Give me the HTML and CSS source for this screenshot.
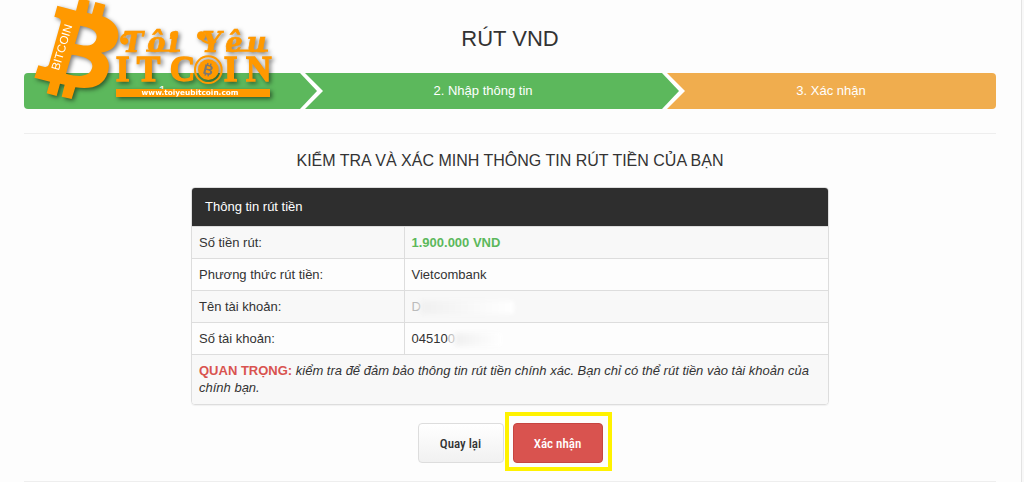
FILE: index.html
```html
<!DOCTYPE html>
<html lang="vi">
<head>
    <meta charset="UTF-8">
    <meta name="viewport" content="width=device-width, initial-scale=1.0">
    <title>Rút VND</title>
    <link rel="stylesheet" href="styles.css">
</head>
<body>
    <main class="page">
        <svg class="logo" viewBox="0 0 780 315" role="img" aria-label="Tôi Yêu Bitcoin">
            <path class="logo-fill" fill-rule="evenodd" d="M112 17 L168 32 L178 -6 L209 2 L201 38 L216 42 L226 6 L256 14 L247 49 C280 60 300 84 294 115 C289 140 273 155 243 158 C267 173 271 195 263 219 C251 257 216 270 166 262 L155 297 L125 290 L134 254 L120 251 L110 288 L80 280 L90 245 L43 233 L55 196 L74 201 Q84 203 87 193 L122 68 Q125 57 116 54 L103 50 Z M181 77 L165 131 C198 140 223 139 229 116 C235 93 213 83 181 77 Z M155 164 L138 221 C178 232 208 231 216 205 C223 178 194 169 155 164 Z"/>
            <text class="logo-side" transform="translate(116 213) rotate(-73)">BITCOIN</text>
            <g class="logo-script">
                <text x="308 382 446" y="155">Tôi</text>
                <text x="546 616 680" y="155">Yêu</text>
            </g>
            <path class="logo-curl" d="M340 100 C310 98 300 112 305 124 C312 136 326 128 320 119"/>
            <circle cx="312" cy="122" r="10" class="logo-fill"/>
            <path class="logo-curl" d="M541 104 C543 126 566 134 588 124 M378 152 H480 M618 152 H744"/>
            <circle cx="544" cy="107" r="13" class="logo-fill"/>
            <circle cx="462" cy="106" r="12" class="logo-fill"/>
            <g class="logo-word">
                <text x="287 350 449" y="243">ITC</text>
                <text x="611 678" y="243">IN</text>
            </g>
            <circle cx="565" cy="209" r="40" class="logo-ring"/>
            <circle cx="565" cy="209" r="31" class="logo-fill"/>
            <text class="logo-coin" x="565" y="224" transform="rotate(14 565 209)">B</text>
            <path class="logo-coin-line" d="M564 189 L562 197 M573 191 L571 199 M557 219 L555 227 M566 222 L564 229"/>
            <rect x="288" y="267" width="462" height="24" class="logo-fill"/>
            <text class="logo-url" x="510" y="286">www.toiyeubitcoin.com</text>
        </svg>

        <h1>RÚT VND</h1>

        <ol class="steps">
            <li class="step done">1.</li>
            <li class="step done">2. Nhập thông tin</li>
            <li class="step active">3. Xác nhận</li>
        </ol>

        <section class="confirm">
            <h2>KIỂM TRA VÀ XÁC MINH THÔNG TIN RÚT TIỀN CỦA BẠN</h2>

            <div class="panel">
                <h3>Thông tin rút tiền</h3>
                <table>
                    <tr>
                        <th scope="row">Số tiền rút:</th>
                        <td class="amount">1.900.000 VND</td>
                    </tr>
                    <tr>
                        <th scope="row">Phương thức rút tiền:</th>
                        <td>Vietcombank</td>
                    </tr>
                    <tr>
                        <th scope="row">Tên tài khoản:</th>
                        <td><span class="faded">D</span><span class="hidden-name"></span></td>
                    </tr>
                    <tr>
                        <th scope="row">Số tài khoản:</th>
                        <td>04510<span class="faded">0</span><span class="hidden-number"></span></td>
                    </tr>
                    <tr>
                        <td colspan="2" class="note"><strong>QUAN TRỌNG:</strong> kiểm tra để đảm bảo thông tin rút tiền chính xác. Bạn chỉ có thể rút tiền vào tài khoản của chính bạn.</td>
                    </tr>
                </table>
            </div>

            <div class="actions">
                <button type="button" class="btn">Quay lại</button>
                <div class="highlight">
                    <button type="submit" class="btn btn-danger">Xác nhận</button>
                </div>
            </div>
        </section>
    </main>
</body>
</html>
```
FILE: styles.css
```css
* {
    box-sizing: border-box;
}
body {
    margin: 0;
    background-color: #f8f8f8;
    color: #333;
    font-family: "Liberation Sans", Arial, sans-serif;
    font-size: 13px;
    line-height: 17px;
}
.page {
    position: relative;
    margin-right: 2px;
    padding: 24px 25px 0 24px;
    background-color: #fdfdfd;
    border-right: 1px solid #e3e3e3;
}
h1, h2, h3 {
    margin: 0;
    font-weight: normal;
}
h1 {
    font-size: 22px;
    line-height: 30px;
    text-align: center;
}

/* Logo */
.logo {
    position: absolute;
    top: 0;
    left: 20px;
    z-index: 2;
    width: 260px;
    height: 105px;
    filter: drop-shadow(2px 2px 2px rgba(0, 0, 0, 0.5));
}
.logo-fill {
    fill: #ff9900;
}
.logo-side {
    fill: #fff;
    font-size: 35px;
}
.logo-script {
    fill: #ff9900;
    stroke: #ff9900;
    stroke-width: 2;
    font-family: "DejaVu Serif", serif;
    font-size: 82px;
    font-style: italic;
    font-weight: bold;
}
.logo-curl {
    fill: none;
    stroke: #ff9900;
    stroke-width: 7;
}
.logo-word {
    fill: #ff9900;
    stroke: #ff9900;
    stroke-width: 4;
    font-family: "Liberation Serif", serif;
    font-size: 106px;
    font-weight: bold;
}
.logo-ring {
    fill: none;
    stroke: #ff9900;
    stroke-width: 6;
}
.logo-coin {
    fill: #777;
    font-size: 42px;
    font-weight: bold;
    text-anchor: middle;
}
.logo-coin-line {
    stroke: #777;
    stroke-width: 4;
}
.logo-url {
    fill: #fff;
    font-family: "DejaVu Sans", sans-serif;
    font-size: 22px;
    font-weight: bold;
    text-anchor: middle;
}

/* Steps */
.steps {
    display: grid;
    grid-template-columns: 276fr 362fr 334fr;
    margin: 19px 0 0;
    padding: 0;
    overflow: hidden;
    border-radius: 4px;
    list-style: none;
}
.step {
    position: relative;
    height: 36px;
    padding-left: 4px;
    color: #fff;
    line-height: 36px;
    text-align: center;
}
.done {
    background-color: #5cb85c;
}
.active {
    background-color: #f0ad4e;
}
.done::before,
.done::after {
    content: "";
    position: absolute;
    top: 0;
    left: calc(100% - 1px);
    z-index: 1;
    width: 24px;
    height: 36px;
    background-color: #fff;
    clip-path: polygon(1px 0, 6px 0, 100% 50%, 6px 100%, 1px 100%);
}
.done::after {
    width: 18px;
    background-color: #5cb85c;
    clip-path: polygon(0 0, 1px 0, 100% 50%, 1px 100%, 0 100%);
}

/* Confirmation */
.confirm {
    margin-top: 24px;
    padding-top: 16px;
    border-top: 1px solid #eee;
    border-bottom: 1px solid #eee;
}
h2 {
    font-size: 16px;
    line-height: 22px;
    text-align: center;
}
.panel {
    width: 66%;
    max-width: 638px;
    margin: 15px auto 0;
    overflow: hidden;
    border: 1px solid #ddd;
    border-radius: 4px;
    box-shadow: 0 1px 1px rgba(0, 0, 0, 0.05);
}
h3 {
    padding: 0 13px;
    background-color: #2e2e2e;
    color: #fff;
    font-size: 13px;
    line-height: 38px;
}
table {
    width: 100%;
    border-collapse: collapse;
}
th, td {
    padding: 7px;
    border-top: 1px solid #ddd;
    font-weight: normal;
    text-align: left;
    vertical-align: top;
}
th {
    width: 212px;
    border-right: 1px solid #ddd;
}
tr:nth-child(odd) {
    background-color: #f8f8f8;
}
td.amount {
    color: #5cb85c;
    font-weight: bold;
}
.faded {
    color: #bbb;
}
.hidden-name,
.hidden-number {
    display: inline-block;
    height: 13px;
    vertical-align: middle;
    background: linear-gradient(to right, #f0f0f0, #fff);
    filter: blur(2px);
}
.hidden-name {
    width: 93px;
}
.hidden-number {
    width: 47px;
}
.note {
    padding-bottom: 8px;
    font-style: italic;
}
.note strong {
    color: #d9534f;
    font-style: normal;
}

/* Buttons */
.actions {
    display: flex;
    justify-content: center;
    gap: 9px;
    padding: 18px 0;
}
.highlight {
    position: relative;
}
.highlight::after {
    content: "";
    position: absolute;
    inset: -11px -9px -8px -8px;
    border: 4px solid #fff200;
    pointer-events: none;
}
.btn {
    min-width: 86px;
    height: 40px;
    padding: 0 18px;
    background: linear-gradient(#fff, #f1f1f1);
    border: 1px solid #ddd;
    border-radius: 4px;
    color: #333;
    font-family: "Roboto Condensed", Roboto, sans-serif;
    font-size: 13px;
    font-weight: 500;
    cursor: pointer;
}
.btn-danger {
    min-width: 90px;
    background: #d9534f;
    border-color: #c64541;
    color: #fff;
}
```
